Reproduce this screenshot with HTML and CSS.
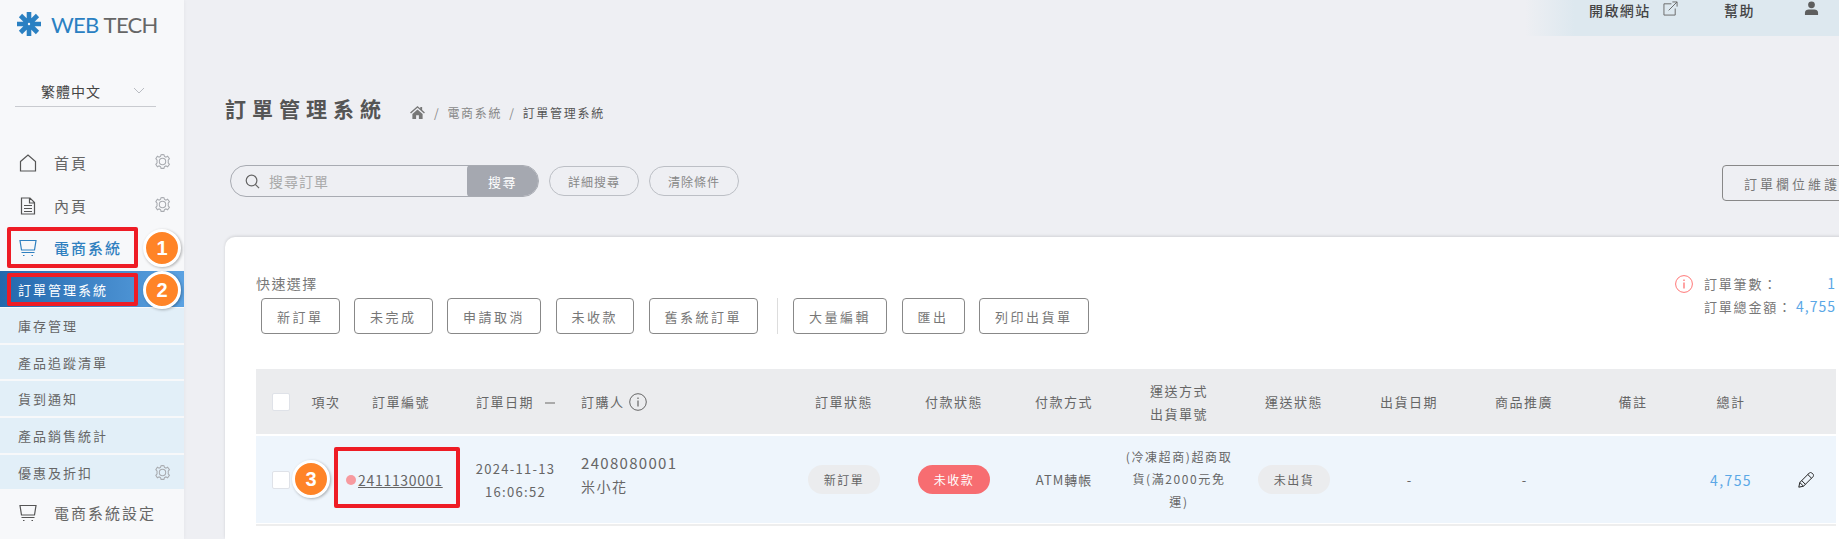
FILE: index.html
```html
<!DOCTYPE html>
<html lang="zh-Hant">
<head>
<meta charset="utf-8">
<title>訂單管理系統</title>
<link rel="stylesheet" href="styles.css">
</head>
<body>
<div class="app">
  <aside class="sidebar">
    <div class="logo">
      <svg class="logo-mark" viewBox="0 0 24 24"><g stroke="#2a80c2" stroke-width="4.600"><path d="M12 0v24M0 12h24M3.500 3.500l17 17M20.500 3.500l-17 17"/></g><circle cx="12" cy="12" r="1.200" fill="#f7f8fa"/></svg>
      <span class="logo-web">WEB</span><span class="logo-tech">TECH</span>
    </div>
    <div class="lang"><span class="lang-text">繁體中文</span><svg class="lang-caret" viewBox="0 0 12 7"><path d="M1 1l5 5 5-5" fill="none" stroke="#b9bcc2"/></svg></div>
    <nav class="menu">
      <a class="menu-item"><svg class="menu-icon" viewBox="0 0 18 18"><path d="M1.500 7.500L9 1l7.500 6.500V17h-15z" fill="none" stroke="#555" stroke-width="1.200"/></svg><span>首頁</span><svg class="gear" viewBox="0 0 24 24"><use href="#gear"/></svg></a>
      <a class="menu-item"><svg class="menu-icon" viewBox="0 0 18 18"><path d="M2.500 1h8.500l4.500 4.500V17h-13zM10.500 1v5h5M5 8.500h8M5 11.500h8M5 14.500h8" fill="none" stroke="#555" stroke-width="1.200"/></svg><span>內頁</span><svg class="gear" viewBox="0 0 24 24"><use href="#gear"/></svg></a>
      <a class="menu-item is-open"><svg class="menu-icon" viewBox="0 0 18 18"><use href="#cart-blue"/></svg><span>電商系統</span></a>
    </nav>
    <ul class="submenu">
      <li class="sub is-active">訂單管理系統</li>
      <li class="sub">庫存管理</li>
      <li class="sub">產品追蹤清單</li>
      <li class="sub">貨到通知</li>
      <li class="sub">產品銷售統計</li>
      <li class="sub">優惠及折扣<svg class="gear" viewBox="0 0 24 24"><use href="#gear"/></svg></li>
    </ul>
    <a class="menu-item menu-last"><svg class="menu-icon" viewBox="0 0 18 18"><path d="M1 1.500h16l-1.500 9.500h-13zM2.500 13.500h13M4 16.500h1.500M12.500 16.500h1.500" fill="none" stroke="#555" stroke-width="1.200"/></svg><span>電商系統設定</span></a>
  </aside>

  <main class="main">
    <header class="topbar">
      <a class="top-link top-open">開啟網站<svg class="ext" viewBox="0 0 16 16"><path d="M9 3H1v12h12V8M6 10L15 1M10 1h5v5" fill="none" stroke="#666" stroke-width="1"/></svg></a>
      <a class="top-link top-help">幫助</a>
      <a class="top-link top-user"><svg viewBox="0 0 16 16" class="user"><circle cx="8" cy="4" r="3.600" fill="#5e5e5e"/><path d="M1 15v-2.500C1 10 3 9 5 9h6c2 0 4 1 4 3.500V15z" fill="#5e5e5e"/></svg></a>
    </header>

    <div class="title-row">
      <h1 class="title">訂單管理系統</h1>
      <div class="crumbs">
        <svg class="home" viewBox="0 0 16 14"><path d="M8 0L0 7l1 1 7-6 7 6 1-1-3-2.600V1h-2v1.700zM2.500 8.500V14h4v-4h3v4h4V8.500L8 3.800z" fill="#777"/></svg>
        <span class="crumb-sep">/</span><span class="crumb">電商系統</span><span class="crumb-sep">/</span><span class="crumb-now">訂單管理系統</span>
      </div>
    </div>

    <div class="tools">
      <div class="search">
        <svg class="search-icon" viewBox="0 0 16 16"><circle cx="7" cy="7" r="5.700" fill="none" stroke="#666" stroke-width="1.300"/><path d="M11 11l4 4" stroke="#666" stroke-width="1.300"/></svg>
        <span class="search-text">搜尋訂單</span>
        <span class="search-btn">搜尋</span>
      </div>
      <span class="pill">詳細搜尋</span>
      <span class="pill">清除條件</span>
      <span class="maintain">訂單欄位維護</span>
    </div>

    <section class="card">
      <div class="quick">
        <div class="quick-left">
          <div class="quick-label">快速選擇</div>
          <div class="quick-btns">
            <span class="btn">新訂單</span><span class="btn">未完成</span><span class="btn">申請取消</span><span class="btn">未收款</span><span class="btn">舊系統訂單</span>
            <span class="divider"></span>
            <span class="btn">大量編輯</span><span class="btn">匯出</span><span class="btn">列印出貨單</span>
          </div>
        </div>
        <div class="stats">
          <svg class="stats-icon" viewBox="0 0 18 18"><circle cx="9" cy="9" r="8.400" fill="none" stroke="#f77" stroke-width="1"/><path d="M9 7.500v6M9 4.500v1.500" stroke="#f66" stroke-width="1.200"/></svg>
          <dl class="stats-list">
            <div class="stat"><dt>訂單筆數：</dt><dd>1</dd></div>
            <div class="stat"><dt>訂單總金額：</dt><dd>4,755</dd></div>
          </dl>
        </div>
      </div>

      <div class="grid head">
        <div class="c-check"><span class="box"></span></div>
        <div>項次</div>
        <div>訂單編號</div>
        <div>訂單日期<span class="dash"></span></div>
        <div class="c-buyer">訂購人<svg class="info" viewBox="0 0 18 18"><circle cx="9" cy="9" r="8.300" fill="none" stroke="#666" stroke-width="1"/><path d="M9 7.500v6M9 4.500v1.500" stroke="#666" stroke-width="1.200"/></svg></div>
        <div>訂單狀態</div>
        <div>付款狀態</div>
        <div>付款方式</div>
        <div class="two-line">運送方式<br>出貨單號</div>
        <div>運送狀態</div>
        <div>出貨日期</div>
        <div>商品推廣</div>
        <div>備註</div>
        <div>總計</div>
        <div></div>
      </div>

      <div class="grid row">
        <div class="c-check"><span class="box"></span></div>
        <div></div>
        <div class="c-no"><span class="dot"></span><a class="order-no">2411130001</a></div>
        <div class="c-date">2024-11-13<br>16:06:52</div>
        <div class="c-buyer buyer-cell"><span class="buyer-id">2408080001</span><span class="buyer-name">米小花</span></div>
        <div><span class="badge">新訂單</span></div>
        <div><span class="badge badge-red">未收款</span></div>
        <div class="c-pay">ATM轉帳</div>
        <div class="c-ship">(冷凍超商)超商取<br>貨(滿2000元免<br>運)</div>
        <div><span class="badge">未出貨</span></div>
        <div class="c-none">-</div>
        <div class="c-none">-</div>
        <div></div>
        <div class="c-total">4,755</div>
        <div class="c-edit"><svg class="pencil" viewBox="0 0 16 16"><path d="M.8 15.200l1-4.700L11.300 1c.8-.8 1.700-.8 2.400-.1l1.400 1.400c.7.700.7 1.600-.1 2.400L5.500 14.200zM1.800 10.500l3.700 3.700M3.700 8.600l3.700 3.700M9.800 2.500l3.700 3.700" fill="none" stroke="#222" stroke-width="1"/></svg></div>
      </div>
      <div class="row-line"></div>
    </section>
  </main>
</div>

<span class="mark mark-1"></span>
<span class="mark mark-2"></span>
<span class="mark mark-3"></span>
<span class="num num-1">1</span>
<span class="num num-2">2</span>
<span class="num num-3">3</span>

<svg class="defs" width="0" height="0">
  <defs>
    <g id="gear"><path d="M12 2l2 .3.8 2.600 2 .9 2.400-1.200 2.600 3.400-1.800 2 .2 2-.2 2 1.800 2-2.600 3.400-2.400-1.200-2 .9L14 21.700h-4l-.8-2.600-2-.9-2.400 1.200-2.200-3.400 1.800-2-.2-2 .2-2-1.800-2 2.200-3.400 2.400 1.200 2-.9L10 2.300z" fill="none" stroke="#a8abb0" stroke-width="1.500"/><circle cx="12" cy="12" r="4.500" fill="none" stroke="#a8abb0" stroke-width="1.500"/></g>
    <g id="cart-blue"><path d="M1 1.500h16l-1.500 9.500h-13zM2.500 13.500h13M4 16.500h1.500M12.500 16.500h1.500" fill="none" stroke="#2f80c0" stroke-width="1.200"/></g>
  </defs>
</svg>
</body>
</html>
```

FILE: styles.css
```css
* { box-sizing: border-box; }
html, body { margin: 0; height: 539px; overflow: hidden; }
body {
  position: relative;
  background: #eeeff3;
  color: #666;
  font-family: "Noto Sans CJK TC", "Noto Sans", sans-serif;
  font-size: 13px;
}
a { color: inherit; text-decoration: none; }
ul, dl, dd, dt, h1 { margin: 0; padding: 0; list-style: none; }
.defs { position: absolute; }

.app { display: flex; width: 1839px; height: 539px; }

/* sidebar */
.sidebar {
  flex: 0 0 184px;
  height: 539px;
  background: #f7f8fa;
  box-shadow: 1px 0 3px rgba(0, 0, 0, .03);
  position: relative;
}
.logo { display: flex; align-items: center; height: 48px; padding-left: 17px; font-family: "Lato", sans-serif; font-size: 22px; letter-spacing: -.7px; }
.logo-mark { width: 24px; height: 24px; margin-right: 10px; }
.logo-web { color: #2a80c2; margin-right: 5px; }
.logo-tech { color: #666; }
.lang {
  display: flex; align-items: center;
  margin: 29px 28px 0 15px;
  width: 141px; height: 30px;
  border-bottom: 1px solid #c9cbd0;
  padding: 0 11px 2px 26px;
}
.lang-text { font-size: 14px; color: #444; letter-spacing: 1px; flex: 1; }
.lang-caret { width: 12px; height: 7px; }
.menu { margin-top: 34px; }
.menu-item {
  display: flex; align-items: center;
  height: 43px;
  padding-left: 19px;
  font-size: 15px;
  letter-spacing: 2px;
  color: #666;
  position: relative;
}
.menu-icon { width: 18px; height: 18px; margin-right: 17px; flex: none; }
.menu-item .gear { position: absolute; left: 154px; top: 12px; }
.gear { width: 17px; height: 17px; }
.is-open { color: #2f80c0; font-weight: 500; height: 41px; }
.submenu { margin-top: 3px; }
.sub {
  height: 34.700px;
  margin-bottom: 2px;
  padding-left: 18px;
  display: flex; align-items: center;
  background: #e2eff8;
  font-size: 13px;
  letter-spacing: 2px;
  color: #666;
  position: relative;
}
.sub .gear { position: absolute; left: 154px; top: 9px; }
.is-active { background: linear-gradient(90deg, #2468ac, #5ba2e2); color: #fff; height: 36px; margin-bottom: 1px; }
.menu-last { height: 43px; }

/* main */
.main { flex: 1; min-width: 0; position: relative; padding-left: 41px; }
.topbar {
  margin-left: -41px;
  height: 36px;
  padding-left: 1405px;
  background: linear-gradient(90deg, rgba(221, 232, 239, 0) 1341px, #dde8ef 1391px);
  display: flex;
  align-items: flex-start;
  font-size: 14px;
  font-weight: 500;
  letter-spacing: 1.400px;
  color: #444;
}
.top-link { display: flex; align-items: center; height: 20px; }
.top-open { width: 135px; }
.top-help { width: 80px; }
.ext { width: 15px; height: 15px; margin: 0 0 3px 12px; }
.user { width: 15px; height: 15px; margin-bottom: 4px; }

.title-row { display: flex; align-items: center; height: 40px; margin-top: 52px; }
.title { font-size: 21px; font-weight: 700; letter-spacing: 6px; color: #555; width: 185px; }
.crumbs { display: flex; align-items: center; gap: 7px; font-size: 12px; letter-spacing: 1.700px; color: #888; margin-top: 8px; }
.home { width: 15px; height: 13px; margin-right: 2px; }
.crumb-now { color: #555; }

.tools { display: flex; align-items: flex-start; margin: 37px 0 0 5px; height: 36px; position: relative; }
.search {
  width: 309px; height: 32px;
  border: 1px solid #a8abb2;
  border-radius: 16px;
  display: flex; align-items: center;
  padding-left: 14px;
  overflow: hidden;
  margin-right: 10px;
}
.search-icon { width: 15px; height: 15px; margin-right: 9px; }
.search-text { flex: 1; font-size: 14px; letter-spacing: 1px; color: #aaa; }
.search-btn {
  width: 71px; height: 32px;
  background: #a5a8b0;
  border-radius: 4px 0 0 4px;
  color: #fff;
  display: flex; align-items: center; justify-content: center;
  font-size: 13px; letter-spacing: 1.500px;
}
.pill {
  width: 90px; height: 30px;
  margin-top: 1px;
  border: 1px solid #bcbfc5;
  border-radius: 15px;
  margin-right: 10px;
  display: flex; align-items: center; justify-content: center;
  font-size: 12px; letter-spacing: 1px; color: #888;
}
.maintain {
  position: absolute;
  left: 1492px;
  top: 0;
  width: 130px; height: 36px;
  border: 1px solid #888;
  border-radius: 4px;
  display: flex; align-items: center;
  padding-left: 21px;
  font-size: 13px; letter-spacing: 3px; color: #777;
  white-space: nowrap;
}

/* card */
.card {
  margin-top: 36px;
  height: 302px;
  width: 1620px;
  background: #fff;
  border-radius: 10px 0 0 0;
  box-shadow: 0 -1px 3px rgba(0, 0, 0, .12);
  padding: 37px 0 0 31px;
}
.quick { display: flex; height: 95px; width: 1580px; }
.quick-left { flex: 1; }
.quick-label { font-size: 14px; letter-spacing: 1.400px; color: #777; line-height: 18px; }
.quick-btns { display: flex; align-items: center; margin: 6px 0 0 5px; }
.btn {
  height: 36px;
  border: 1px solid #888;
  border-radius: 4px;
  padding: 0 15px;
  display: flex; align-items: center;
  font-size: 13px;
  letter-spacing: 2.500px;
  color: #777;
  margin-right: 14.500px;
}
.divider { width: 1px; height: 36px; background: #ddd; margin: 0 15px 0 4.500px; }
.stats { display: flex; width: 161px; margin-top: -2px; }
.stats-icon { width: 18px; height: 18px; margin: 3px 11px 0 0; flex: none; }
.stats-list { flex: 1; font-size: 13px; letter-spacing: 1.800px; color: #777; }
.stat { display: flex; justify-content: space-between; line-height: 23px; }
.stat dd { color: #5aa7e6; letter-spacing: 1px; font-size: 14px; }

.grid {
  display: grid;
  grid-template-columns: 50px 40px 110px 119px 214px 110px 110px 110px 120px 110px 120px 110px 108px 88px 61px;
  width: 1580px;
  text-align: center;
  align-items: center;
  letter-spacing: 1.500px;
}
.head { height: 65px; background: #ebecee; color: #666; line-height: 23px; }
.row { height: 87px; margin-top: 2px; background: #eef5fc; color: #666; }
.row-line { width: 1580px; height: 2px; margin-top: 1px; background: #eee; }
.c-check { text-align: left; padding-left: 16px; display: flex; }
.box { width: 18px; height: 18px; background: #fff; border: 1px solid #dfe2e8; border-radius: 2px; }
.dash { display: inline-block; width: 10px; height: 2px; background: #aaa; margin-left: 11px; vertical-align: middle; }
.c-buyer { text-align: left; padding-left: 6px; display: flex; align-items: center; }
.info { width: 18px; height: 18px; margin-left: 4px; }
.c-no { display: flex; align-items: center; }
.dot { width: 10px; height: 10px; border-radius: 50%; background: #f79a9f; margin-right: 2px; flex: none; }
.order-no { text-decoration: underline; letter-spacing: .7px; font-size: 14px; }
.c-date { font-size: 13px; line-height: 23px; letter-spacing: 1.300px; }
.buyer-cell { flex-direction: column; align-items: flex-start; justify-content: center; padding-bottom: 10px; }
.buyer-id { font-size: 15px; letter-spacing: 1.300px; line-height: 24px; }
.buyer-name { font-size: 14px; letter-spacing: 1.500px; line-height: 23px; }
.badge {
  display: inline-flex; align-items: center; justify-content: center;
  width: 72px; height: 29px;
  border-radius: 15px;
  background: #ebecee;
  font-size: 12px;
  letter-spacing: 1.500px;
}
.badge-red { background: #f76d71; color: #fff; }
.c-pay { font-size: 13px; letter-spacing: 1px; }
.c-ship { font-size: 12px; line-height: 22.500px; letter-spacing: 1.600px; }
.c-none { letter-spacing: 0; }
.c-total { color: #5aa7e6; font-size: 14px; letter-spacing: 1.400px; }
.c-edit { display: flex; justify-content: center; }
.pencil { width: 16px; height: 16px; }

/* annotations */
.mark { position: absolute; border: 4px solid #ee1c25; border-radius: 2px; }
.mark-1 { left: 7px; top: 227px; width: 131px; height: 41px; }
.mark-2 { left: 7px; top: 273px; width: 131px; height: 33px; }
.mark-3 { left: 334px; top: 447px; width: 126px; height: 61px; }
.num {
  position: absolute;
  width: 38px; height: 38px;
  border-radius: 50%;
  background: #ff8427;
  border: 3px solid #fff;
  box-shadow: 1px 1px 3px rgba(0, 0, 0, .3);
  color: #fff;
  font-family: "Liberation Sans", sans-serif;
  font-weight: 700;
  font-size: 20px;
  display: flex; align-items: center; justify-content: center;
}
.num-1 { left: 143px; top: 229px; }
.num-2 { left: 143px; top: 271px; }
.num-3 { left: 292px; top: 460px; }
```
